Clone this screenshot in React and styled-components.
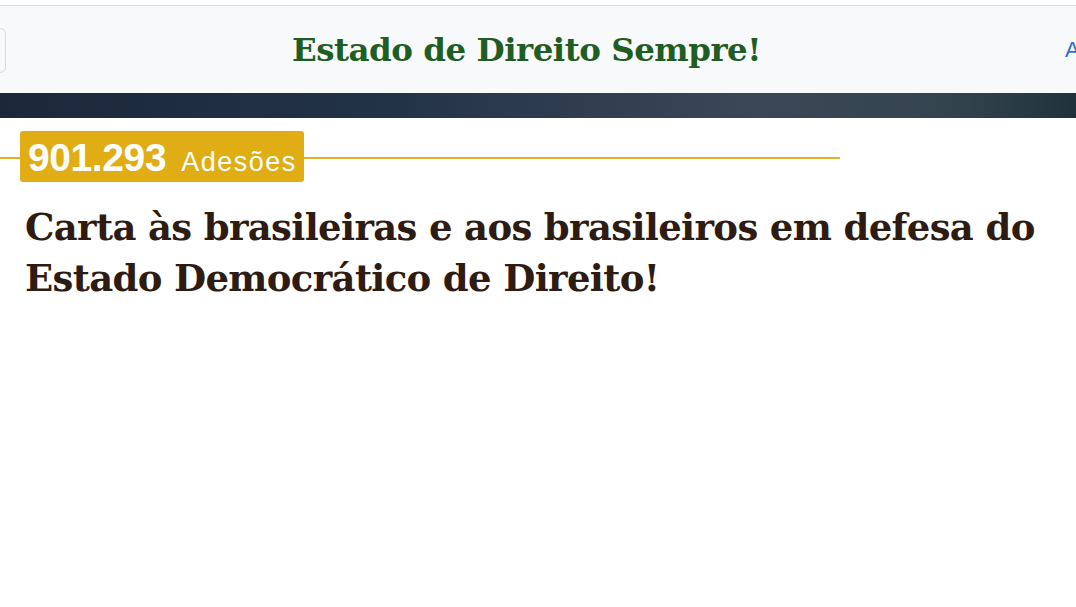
import React from 'react';
import styled, { createGlobalStyle } from 'styled-components';

const GlobalStyle = createGlobalStyle`
  html, body {
    margin: 0;
    padding: 0;
    background: #fff;
    overflow: hidden;
  }
  * {
    box-sizing: border-box;
  }
`;

const Page = styled.div`
  width: 1076px;
  padding-top: 5px;
`;

const Header = styled.header`
  display: flex;
  align-items: center;
  justify-content: space-between;
  height: 88px;
  background: #f8f9fa;
  border-top: 1px solid #dcdcdc;
  overflow: hidden;
`;

const MenuButton = styled.button`
  width: 44px;
  height: 45px;
  margin-left: -38px;
  margin-top: 1px;
  background: transparent;
  border: 1px solid #d6d9dc;
  border-radius: 6px;
`;

const Title = styled.h1`
  margin: 0 0 0 -18px;
  font-family: 'DejaVu Serif', serif;
  font-size: 32.5px;
  font-weight: 700;
  color: #1f5e22;
  letter-spacing: -0.5px;
`;

const SignLink = styled.a`
  width: 11px;
  overflow: hidden;
  font-family: 'Liberation Sans', Arial, sans-serif;
  font-size: 22px;
  color: #2a6fd6;
  text-decoration: none;
  white-space: nowrap;
`;

const Banner = styled.div`
  height: 25px;
  background: linear-gradient(
    90deg,
    #1b283a 0%,
    #223246 35%,
    #3a4757 70%,
    #34444f 88%,
    #1f323a 100%
  );
`;

const Content = styled.main`
  padding-top: 13px;
`;

const CounterRow = styled.div`
  display: flex;
  align-items: center;
  width: 840px;
`;

const Rule = styled.span`
  display: block;
  height: 2px;
  margin-top: 2px;
  background: #dcb02a;
  width: ${props => (props.$grow ? 'auto' : props.$width)};
  flex: ${props => (props.$grow ? 1 : 'none')};
`;

const Badge = styled.div`
  display: flex;
  align-items: baseline;
  gap: 15px;
  height: 51px;
  padding: 5px 7px 0 8px;
  background: #e0ad14;
  border-radius: 3px;
  color: #fff;
  font-family: 'Liberation Sans', Arial, sans-serif;
`;

const Count = styled.span`
  font-size: 39px;
  font-weight: 700;
  letter-spacing: -0.4px;
`;

const Label = styled.span`
  font-size: 27px;
  letter-spacing: 1.5px;
`;

const Heading = styled.h2`
  margin: 20px 0 0 25px;
  font-family: 'DejaVu Serif', serif;
  font-size: 37px;
  font-weight: 700;
  line-height: 51px;
  color: #2e1b12;
  letter-spacing: -0.65px;
`;

export default function App() {
  return (
    <>
      <GlobalStyle />
      <Page>
        <Header>
          <MenuButton aria-label="menu" />
          <Title>Estado de Direito Sempre!</Title>
          <SignLink href="#">Assinar</SignLink>
        </Header>
        <Banner />
        <Content>
          <CounterRow>
            <Rule $width="20px" />
            <Badge>
              <Count>901.293</Count>
              <Label>Adesões</Label>
            </Badge>
            <Rule $grow />
          </CounterRow>
          <Heading>
            Carta às brasileiras e aos brasileiros em defesa do
            <br />
            Estado Democrático de Direito!
          </Heading>
        </Content>
      </Page>
    </>
  );
}
